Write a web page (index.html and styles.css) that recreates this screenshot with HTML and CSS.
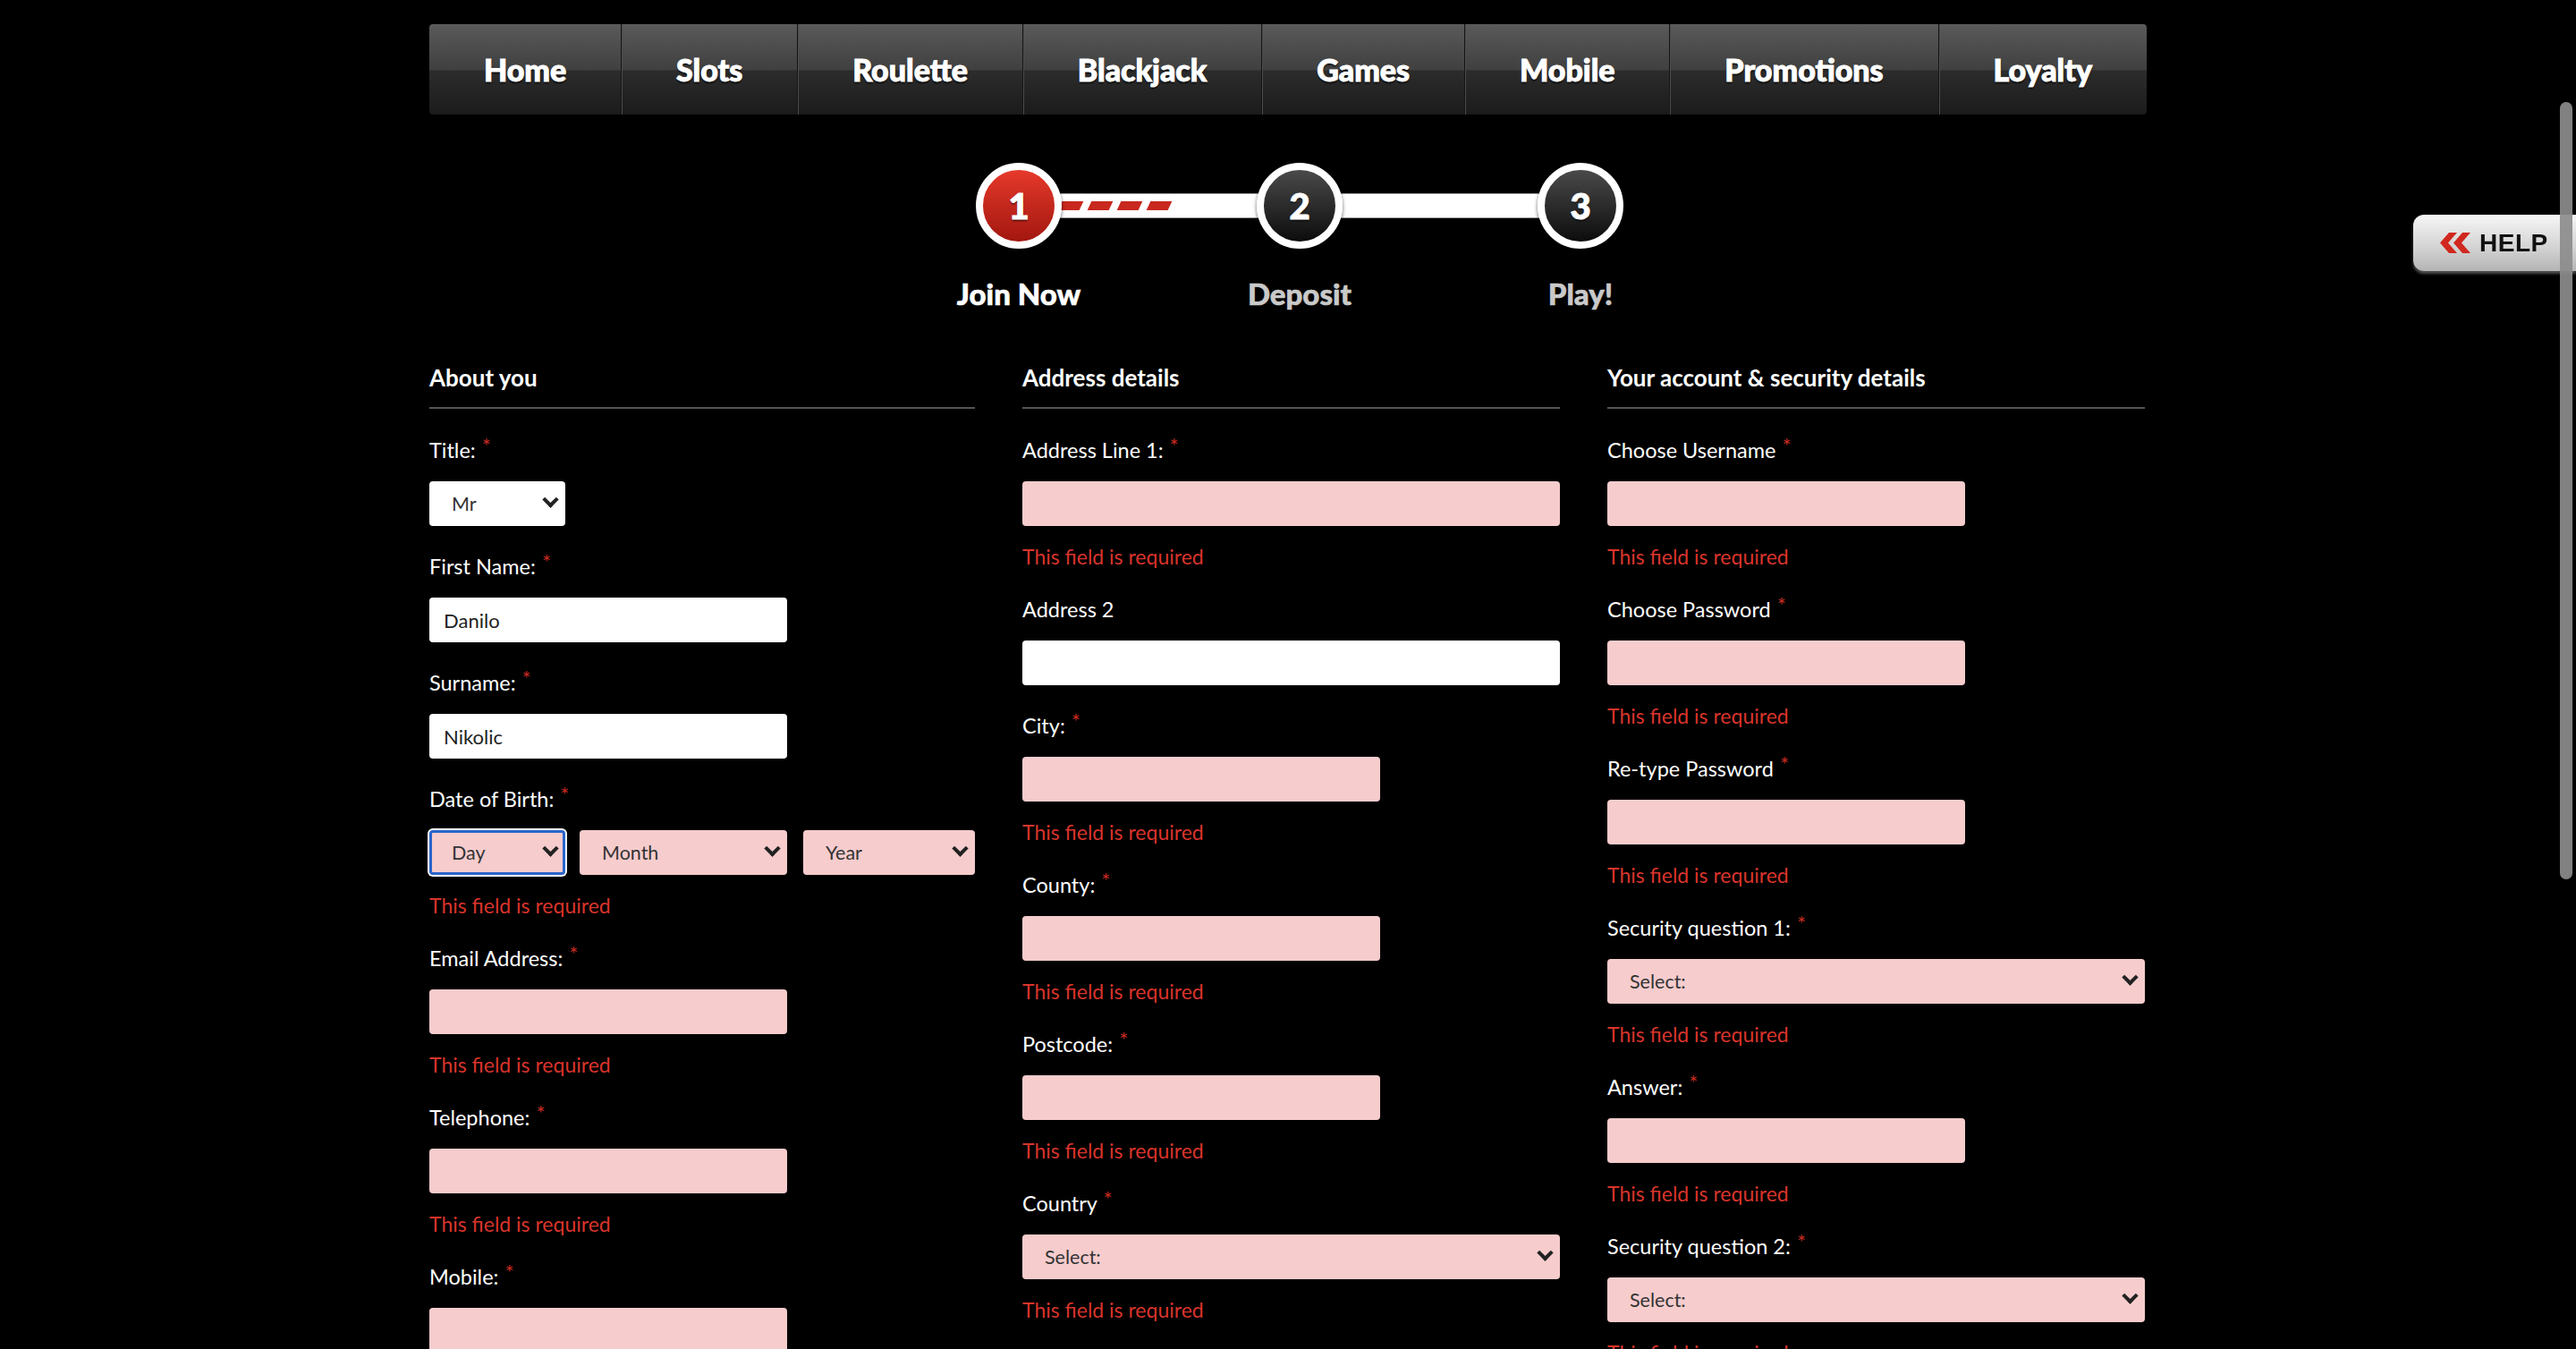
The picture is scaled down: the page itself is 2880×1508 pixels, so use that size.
FILE: index.html
```html
<!DOCTYPE html>
<html lang="en">
<head>
<meta charset="utf-8">
<title>Join Now</title>
<link rel="stylesheet" href="styles.css">
</head>
<body>
<div class="page">
  <nav class="topnav">
    <a class="nav-item" href="#">Home</a>
    <a class="nav-item" href="#">Slots</a>
    <a class="nav-item" href="#">Roulette</a>
    <a class="nav-item" href="#">Blackjack</a>
    <a class="nav-item" href="#">Games</a>
    <a class="nav-item" href="#">Mobile</a>
    <a class="nav-item" href="#">Promotions</a>
    <a class="nav-item" href="#">Loyalty</a>
  </nav>

  <div class="steps">
    <div class="step-track">
      <div class="circle circle-active">1</div>
      <div class="bar"><span class="dash"></span><span class="dash"></span><span class="dash"></span><span class="dash"></span></div>
      <div class="circle">2</div>
      <div class="bar"></div>
      <div class="circle">3</div>
    </div>
    <div class="step-labels">
      <div class="step-label step-label-active">Join Now</div>
      <div class="step-label">Deposit</div>
      <div class="step-label">Play!</div>
    </div>
  </div>

  <form class="reg">
    <section class="col col-wide">
      <h2 class="col-title">About you</h2>
      <div class="field field-plain">
        <label class="lbl">Title: <sup class="req">*</sup></label>
        <div class="sel w-title"><select class="ctl"><option>Mr</option></select></div>
      </div>
      <div class="field field-plain">
        <label class="lbl">First Name: <sup class="req">*</sup></label>
        <input class="ctl w-md" type="text" value="Danilo">
      </div>
      <div class="field field-plain">
        <label class="lbl">Surname: <sup class="req">*</sup></label>
        <input class="ctl w-md" type="text" value="Nikolic">
      </div>
      <div class="field">
        <label class="lbl">Date of Birth: <sup class="req">*</sup></label>
        <div class="dob">
          <div class="sel w-day"><select class="ctl bad focus"><option>Day</option></select></div>
          <div class="sel w-month"><select class="ctl bad"><option>Month</option></select></div>
          <div class="sel w-year"><select class="ctl bad"><option>Year</option></select></div>
        </div>
        <div class="err">This field is required</div>
      </div>
      <div class="field">
        <label class="lbl">Email Address: <sup class="req">*</sup></label>
        <input class="ctl bad w-md" type="text">
        <div class="err">This field is required</div>
      </div>
      <div class="field">
        <label class="lbl">Telephone: <sup class="req">*</sup></label>
        <input class="ctl bad w-md" type="text">
        <div class="err">This field is required</div>
      </div>
      <div class="field">
        <label class="lbl">Mobile: <sup class="req">*</sup></label>
        <input class="ctl bad w-md" type="text">
        <div class="err">This field is required</div>
      </div>
    </section>

    <section class="col">
      <h2 class="col-title">Address details</h2>
      <div class="field">
        <label class="lbl">Address Line 1: <sup class="req">*</sup></label>
        <input class="ctl bad w-full" type="text">
        <div class="err">This field is required</div>
      </div>
      <div class="field field-plain">
        <label class="lbl">Address 2</label>
        <input class="ctl w-full" type="text">
      </div>
      <div class="field">
        <label class="lbl">City: <sup class="req">*</sup></label>
        <input class="ctl bad w-md" type="text">
        <div class="err">This field is required</div>
      </div>
      <div class="field">
        <label class="lbl">County: <sup class="req">*</sup></label>
        <input class="ctl bad w-md" type="text">
        <div class="err">This field is required</div>
      </div>
      <div class="field">
        <label class="lbl">Postcode: <sup class="req">*</sup></label>
        <input class="ctl bad w-md" type="text">
        <div class="err">This field is required</div>
      </div>
      <div class="field">
        <label class="lbl">Country <sup class="req">*</sup></label>
        <div class="sel w-full"><select class="ctl bad"><option>Select:</option></select></div>
        <div class="err">This field is required</div>
      </div>
    </section>

    <section class="col">
      <h2 class="col-title">Your account &amp; security details</h2>
      <div class="field">
        <label class="lbl">Choose Username <sup class="req">*</sup></label>
        <input class="ctl bad w-md" type="text">
        <div class="err">This field is required</div>
      </div>
      <div class="field">
        <label class="lbl">Choose Password <sup class="req">*</sup></label>
        <input class="ctl bad w-md" type="password">
        <div class="err">This field is required</div>
      </div>
      <div class="field">
        <label class="lbl">Re-type Password <sup class="req">*</sup></label>
        <input class="ctl bad w-md" type="password">
        <div class="err">This field is required</div>
      </div>
      <div class="field">
        <label class="lbl">Security question 1: <sup class="req">*</sup></label>
        <div class="sel w-full"><select class="ctl bad"><option>Select:</option></select></div>
        <div class="err">This field is required</div>
      </div>
      <div class="field">
        <label class="lbl">Answer: <sup class="req">*</sup></label>
        <input class="ctl bad w-md" type="text">
        <div class="err">This field is required</div>
      </div>
      <div class="field">
        <label class="lbl">Security question 2: <sup class="req">*</sup></label>
        <div class="sel w-full"><select class="ctl bad"><option>Select:</option></select></div>
        <div class="err">This field is required</div>
      </div>
    </section>
  </form>
</div>

<a class="help" href="#">
  <svg class="help-icon" width="34" height="23" viewBox="0 0 34 23"><polygon points="10,0 19,0 9,11.5 19,23 10,23 0,11.5" fill="#d0281e"/><polygon points="25,0 34,0 24,11.5 34,23 25,23 15,11.5" fill="#d0281e"/></svg>
  <span class="help-text">HELP</span>
</a>
<div class="scroll-thumb"></div>
</body>
</html>
```

FILE: styles.css
```css
html {
  scrollbar-width: none;
  background: #000;
}
body {
  margin: 0;
  background: #000;
  color: #fff;
  font-family: Lato, "Open Sans", "Liberation Sans", sans-serif;
}
.page {
  width: 1920px;
  margin: 0 auto;
  padding-top: 27px;
  padding-bottom: 80px;
}

/* top navigation */
.topnav {
  display: flex;
  height: 101px;
  border-radius: 4px;
  overflow: hidden;
  background: linear-gradient(#5a5a5a 0%, #404040 50%, #2c2c2c 52%, #1b1b1b 100%);
}
.nav-item {
  flex: 1 1 auto;
  display: flex;
  align-items: center;
  justify-content: center;
  color: #fff;
  text-decoration: none;
  font-weight: 900;
  font-size: 34px;
  -webkit-text-stroke: 1px #fff;
  text-shadow: 0 2px 2px rgba(0,0,0,.85);
}
.nav-item + .nav-item {
  border-left: 1px solid #141414;
  box-shadow: inset 1px 0 0 #4c4c4c;
}

/* steps */
.steps {
  width: 942px;
  margin: 54px 0 0 502px;
}
.step-track {
  display: flex;
  align-items: center;
  padding: 0 109px;
}
.circle {
  flex: 0 0 96px;
  width: 96px;
  height: 96px;
  box-sizing: border-box;
  border: 8px solid #fff;
  border-radius: 50%;
  background: linear-gradient(#4a4a4a, #0c0c0c);
  display: flex;
  align-items: center;
  justify-content: center;
  font-size: 40px;
  font-weight: 900;
  color: #fff;
  -webkit-text-stroke: 1px #fff;
  text-shadow: 0 2px 2px rgba(0,0,0,.6);
  position: relative;
  z-index: 1;
  box-shadow: 0 2px 4px rgba(0,0,0,.6);
}
.circle-active {
  background: linear-gradient(#e6392b, #a2170f);
}
.bar {
  flex: 1 1 0;
  height: 28px;
  background: #fff;
  box-shadow: inset 0 1px 0 #9a9a9a, inset 0 -1px 0 #9a9a9a;
  display: flex;
  align-items: center;
  gap: 9px;
  margin: 0 -2px;
}
.dash {
  flex: 0 0 24px;
  height: 10px;
  background: #c8281e;
  transform: skewX(-25deg);
}
.step-labels {
  display: flex;
  margin-top: 32px;
}
.step-label {
  flex: 1 1 0;
  text-align: center;
  font-size: 33px;
  line-height: 36px;
  font-weight: 900;
  color: #c9c9c9;
  -webkit-text-stroke: 0.6px #c9c9c9;
  text-shadow: 0 2px 2px rgba(0,0,0,.8);
}
.step-label-active {
  color: #fff;
  -webkit-text-stroke: 0.6px #fff;
}

/* form */
.reg {
  display: grid;
  grid-template-columns: 610px 601px 601px;
  column-gap: 53px;
  margin-top: 59px;
  align-items: start;
}
.col-title {
  margin: 0 0 31px;
  font-size: 26px;
  line-height: 34px;
  font-weight: 700;
  padding-bottom: 16px;
  border-bottom: 2px solid #545454;
}
.field {
  display: flex;
  flex-direction: column;
  align-items: flex-start;
  margin-bottom: 29px;
}
.field-plain {
  margin-bottom: 30px;
}
.lbl {
  font-size: 23.5px;
  line-height: 30px;
  margin-bottom: 20px;
  color: #fff;
}
.req {
  color: #c42a20;
  font-size: 24px;
  vertical-align: top;
  line-height: 22px;
  position: relative;
  top: -1px;
  margin-left: 1px;
}
.ctl {
  display: block;
  height: 50px;
  box-sizing: border-box;
  border: 0;
  border-radius: 4px;
  background: #fff;
  font-family: Lato, "Open Sans", "Liberation Sans", sans-serif;
  font-size: 22px;
  color: #222;
  padding: 0 16px;
  margin: 0;
  outline: none;
}
select.ctl {
  -webkit-appearance: none;
  appearance: none;
  width: 100%;
  padding-left: 25px;
  font-size: 21.5px;
  color: #333;
}
.bad {
  background: #f6cccd;
}
.focus {
  box-shadow: 0 0 0 2px #fff, inset 0 0 0 3px #2b66cc;
}
.w-md { width: 400px; }
.w-full { width: 100%; }
.w-title { width: 152px; }
.sel {
  position: relative;
}
.sel::after {
  content: "";
  position: absolute;
  right: 10px;
  top: 50%;
  width: 9px;
  height: 9px;
  margin-top: -11px;
  border-right: 4px solid #222;
  border-bottom: 4px solid #222;
  transform: rotate(45deg);
  pointer-events: none;
}
.dob {
  display: flex;
  width: 610px;
}
.w-day { width: 152px; }
.w-month { width: 232px; margin-left: 16px; }
.w-year { width: 192px; margin-left: 18px; }
.err {
  margin-top: 19px;
  font-size: 23px;
  line-height: 30px;
  color: #d9342b;
}

/* help tab */
.help {
  position: fixed;
  top: 240px;
  right: 0;
  width: 182px;
  height: 63px;
  box-sizing: border-box;
  padding-left: 30px;
  display: flex;
  align-items: center;
  gap: 10px;
  text-decoration: none;
  border-radius: 12px 0 0 12px;
  background: linear-gradient(#f6f6f6, #d2d2d2 60%, #b4b4b4);
  box-shadow: 0 3px 3px rgba(90,90,90,.9);
}
.help-text {
  font-family: "Liberation Sans", Arial, sans-serif;
  font-weight: 700;
  font-size: 28px;
  color: #111;
  letter-spacing: 0.5px;
}
.scroll-thumb {
  position: fixed;
  top: 114px;
  right: 4px;
  width: 14px;
  height: 869px;
  border-radius: 7px;
  background: rgba(140,140,140,.92);
}
```
